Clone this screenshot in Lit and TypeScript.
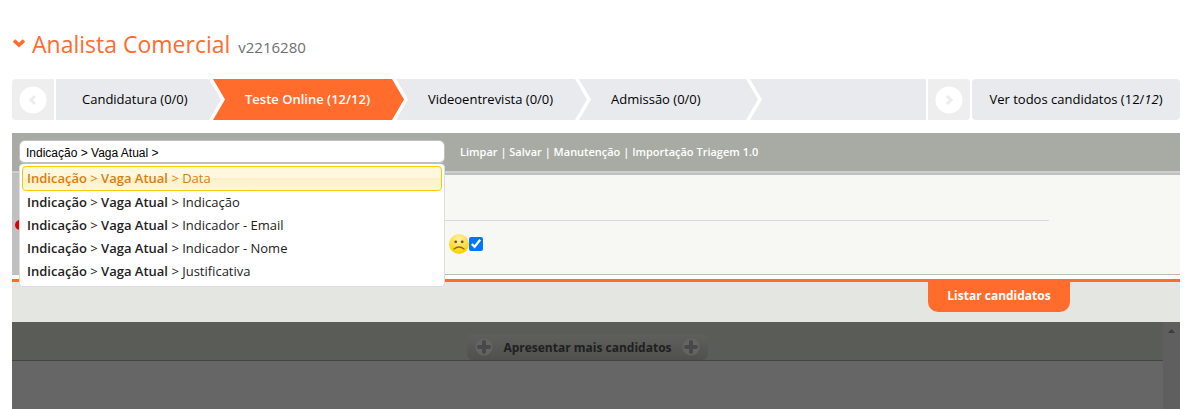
import { LitElement, html, css, svg } from "lit";
import { customElement, state } from "lit/decorators.js";
import { classMap } from "lit/directives/class-map.js";

const GREY = "#e9eaee";
const ORANGE = "#ff6c2c";

interface Step {
  label: string;
  active?: boolean;
}

const STEPS: Step[] = [
  { label: "Candidatura (0/0)" },
  { label: "Teste Online (12/12)", active: true },
  { label: "Videoentrevista (0/0)" },
  { label: "Admissão (0/0)" },
];

const ACTIONS = ["Limpar", "Salvar", "Manutenção", "Importação Triagem 1.0"];
const FIELDS = ["Data", "Indicação", "Indicador - Email", "Indicador - Nome", "Justificativa"];

@customElement("stage-nav")
class StageNav extends LitElement {
  static styles = css`
    :host {
      display: flex;
      gap: 2px;
      height: 41px;
      font-size: 13px;
    }
    .arrow {
      flex: none;
      display: grid;
      place-items: center;
      width: 42px;
      padding: 0;
      border: 0;
      background: #eeeeee;
    }
    .prev { border-radius: 4px 0 0 4px; }
    .next { border-radius: 0 4px 4px 0; }
    .steps {
      flex: 1;
      display: flex;
      min-width: 0;
      overflow: hidden;
      background: #e9eaee;
    }
    .step {
      flex: none;
      box-sizing: border-box;
      width: 167px;
      padding-left: 20px;
      line-height: 41px;
      color: #000;
      white-space: nowrap;
      text-decoration: none;
    }
    .first { width: 153px; padding-left: 26px; }
    .last { width: 155px; }
    .active { background: #ff6c2c; color: #fff; font-weight: 600; }
    .sep { flex: none; background: #fff; }
    .all {
      flex: none;
      box-sizing: border-box;
      width: 208px;
      border-radius: 4px;
      background: #e9eaee;
      line-height: 41px;
      color: #000;
      text-align: center;
      text-decoration: none;
      white-space: nowrap;
    }
  `;

  private arrow(side: "prev" | "next") {
    const d = side === "prev" ? "M16 10 L12 14 L16 18" : "M12 10 L16 14 L12 18";
    return html`<button class="arrow ${side}" aria-label=${side === "prev" ? "Anterior" : "Próximo"}>
      <svg width="28" height="28" viewBox="0 0 28 28">
        <circle cx="14" cy="14" r="13.5" fill="#fff" />
        ${svg`<path d=${d} fill="none" stroke="#ececec" stroke-width="3" />`}
      </svg>
    </button>`;
  }

  private separator(left: string, right: string) {
    return html`<svg class="sep" width="16" height="41" viewBox="0 0 16 41">
      <path d="M0 0 L12 20.5 L0 41 Z" fill=${left} />
      <path d="M4 0 H16 V41 H4 L16 20.5 Z" fill=${right} />
    </svg>`;
  }

  render() {
    const color = (s?: Step) => (s?.active ? ORANGE : GREY);
    return html`
      ${this.arrow("prev")}
      <div class="steps">
        ${STEPS.map(
          (s, i) => html`<a
              href="#"
              class=${classMap({ step: true, active: !!s.active, first: i === 0, last: i === STEPS.length - 1 })}
              >${s.label}</a
            >${this.separator(color(s), color(STEPS[i + 1]))}`
        )}
      </div>
      ${this.arrow("next")}
      <a class="all" href="#">Ver todos candidatos (12/<i>12</i>)</a>
    `;
  }
}

@customElement("filter-bar")
class FilterBar extends LitElement {
  @state() private query = "Indicação > Vaga Atual >";
  @state() private selected = 0;

  static styles = css`
    :host {
      display: flex;
      align-items: flex-start;
      gap: 15px;
      height: 38px;
      background: #a8aba3;
      border-bottom: 2px solid #cfcfcf;
      color: #fff;
      font-size: 11px;
      font-weight: 600;
    }
    .field {
      position: relative;
      width: 426px;
      margin: 7px 0 0 7px;
    }
    .query {
      display: block;
      box-sizing: border-box;
      width: 100%;
      height: 24px;
      padding: 2px 6px 0;
      border: 1px solid #c0c0c0;
      border-bottom-width: 2px;
      border-radius: 6px;
      outline: 0;
      background: #fff;
      color: #000;
      font: 12px "Liberation Sans", Arial, sans-serif;
    }
    .menu {
      position: absolute;
      z-index: 2;
      top: 24px;
      left: 0;
      right: 0;
      display: flex;
      flex-direction: column;
      margin: 0;
      padding: 2px 2px 3px;
      border: 1px solid #ddd;
      border-top: 0;
      border-radius: 4px;
      background: #fff;
    }
    .option {
      height: 23px;
      padding: 0 5px;
      border: 0;
      border-radius: 4px;
      background: none;
      color: #222;
      font: 13px/23px "Trebuchet MS", "Open Sans", sans-serif;
      text-align: left;
      white-space: nowrap;
    }
    .option b { font-weight: 600; }
    .current {
      height: 25px;
      padding: 0 4px;
      border: 1px solid #fbcb09;
      background: linear-gradient(#fff8df 50%, #fdf0c8 50%, #fff7db);
      color: #dd7d0d;
    }
    .actions { line-height: 38px; white-space: nowrap; }
    .action { color: #fff; text-decoration: none; }
  `;

  render() {
    return html`
      <div class="field">
        <input
          class="query"
          type="text"
          aria-label="Filtro"
          .value=${this.query}
          @input=${(e: Event) => (this.query = (e.target as HTMLInputElement).value)}
        />
        <div class="menu" role="listbox" aria-label="Campos">
          ${FIELDS.map(
            (f, i) => html`<button
              role="option"
              aria-selected=${i === this.selected}
              class=${classMap({ option: true, current: i === this.selected })}
              @mouseenter=${() => (this.selected = i)}
            ><b>Indicação</b> &gt; <b>Vaga Atual</b> &gt; ${f}</button>`
          )}
        </div>
      </div>
      <div class="actions">
        ${ACTIONS.map((a, i) => html`${i ? " | " : ""}<a class="action" href="#">${a}</a>`)}
      </div>
    `;
  }
}

@customElement("candidate-list")
class CandidateList extends LitElement {
  static styles = css`
    :host { display: flex; min-height: 87px; background: #666; }
    .main { flex: 1; }
    .head {
      display: flex;
      justify-content: center;
      align-items: flex-end;
      height: 38px;
      background: #5a5c57;
      border-bottom: 1px solid #444;
    }
    .more {
      display: flex;
      align-items: center;
      gap: 10px;
      height: 26px;
      padding: 0 8px;
      border: 0;
      border-radius: 6px;
      background: linear-gradient(#5f605c, #50504e);
      color: #202020;
      font: bold 12px "Trebuchet MS", "Open Sans", sans-serif;
      white-space: nowrap;
    }
    .track {
      display: flex;
      justify-content: center;
      width: 17px;
      padding-top: 7px;
      background: #5f5f5f;
    }
  `;

  private plus() {
    return html`<svg width="18" height="18" viewBox="0 0 18 18">
      <circle cx="9" cy="9" r="8.5" fill="#646464" />
      <path d="M9 4V14M4 9H14" stroke="#484848" stroke-width="4" stroke-linecap="round" />
    </svg>`;
  }

  render() {
    return html`
      <div class="main">
        <div class="head">
          <button class="more">${this.plus()}<span>Apresentar mais candidatos</span>${this.plus()}</button>
        </div>
      </div>
      <div class="track">
        <svg width="7" height="4" viewBox="0 0 7 4"><path d="M0 4 L3.5 0 L7 4 Z" fill="#3c3c3c" /></svg>
      </div>
    `;
  }
}

@customElement("app-root")
class AppRoot extends LitElement {
  static styles = css`
    :host {
      display: block;
      box-sizing: border-box;
      padding: 27px 9px 0 12px;
      background: #fff;
      font-family: "Trebuchet MS", "Open Sans", sans-serif;
    }
    .title {
      display: flex;
      align-items: baseline;
      gap: 8px;
      height: 34px;
      margin: 0 0 18px;
      color: #ff6c2c;
      font-size: 23px;
      font-weight: normal;
      line-height: 34px;
      white-space: nowrap;
    }
    .caret { align-self: center; margin-right: -2px; }
    .version { color: #6b7072; font-size: 15px; }
    .filters { margin-top: 13px; }
    .panel {
      display: flex;
      height: 99px;
      border-top: 2px solid #bfbfbf;
      border-bottom: 1px solid #bbb;
      background: #f7f8f3;
    }
    .side {
      display: flex;
      align-items: center;
      width: 120px;
      padding-left: 3px;
      background: #c0c0c0;
    }
    .rows { flex: 1; margin-right: 131px; }
    .rule { height: 45px; border-bottom: 1px solid #d9d9d9; }
    .mood { display: flex; align-items: center; height: 46px; padding-left: 314px; }
    .check { width: 14px; height: 14px; margin: 0; accent-color: #0075ff; }
    .footer {
      display: flex;
      justify-content: flex-end;
      align-items: flex-start;
      height: 40px;
      margin-top: 4px;
      padding-right: 110px;
      border-top: 3px solid #ff6c2c;
      background: #e4e6e2;
    }
    .list {
      width: 142px;
      height: 30px;
      padding: 0 0 3px;
      border: 0;
      border-radius: 0 0 10px 10px;
      background: #ff6c2c;
      color: #fff;
      font: bold 12px "Trebuchet MS", "Open Sans", sans-serif;
    }
  `;

  render() {
    return html`
      <h1 class="title">
        <svg class="caret" width="14" height="10" viewBox="0 0 14 10">
          <path d="M2 1.5 L7 6 L12 1.5" fill="none" stroke="#ff6c2c" stroke-width="3.6" />
        </svg>
        <span>Analista Comercial</span>
        <span class="version">v2216280</span>
      </h1>
      <stage-nav></stage-nav>
      <filter-bar class="filters"></filter-bar>
      <section class="panel">
        <div class="side">
          <svg width="10" height="10" viewBox="0 0 10 10"><circle cx="5" cy="5" r="5" fill="#e00000" /></svg>
        </div>
        <div class="rows">
          <div class="rule"></div>
          <div class="mood">
            <svg width="20" height="20" viewBox="0 0 20 20" aria-hidden="true">
              <defs>
                <radialGradient id="face" cx="50%" cy="25%" r="75%">
                  <stop offset="0" stop-color="#fff0a0" />
                  <stop offset="0.5" stop-color="#fbe05a" />
                  <stop offset="0.75" stop-color="#fddc10" />
                  <stop offset="1" stop-color="#f5cf00" />
                </radialGradient>
              </defs>
              <circle cx="10" cy="10" r="10" fill="url(#face)" />
              <circle cx="6.7" cy="7.8" r="1.4" fill="#7a5410" />
              <circle cx="13.2" cy="7.8" r="1.4" fill="#7a5410" />
              <path d="M5 15 Q10 11 15 15" fill="none" stroke="#94690f" stroke-width="1.3" stroke-linecap="round" />
            </svg>
            <input class="check" type="checkbox" aria-label="Reprovados" checked />
          </div>
        </div>
      </section>
      <div class="footer"><button class="list">Listar candidatos</button></div>
      <candidate-list></candidate-list>
    `;
  }
}
